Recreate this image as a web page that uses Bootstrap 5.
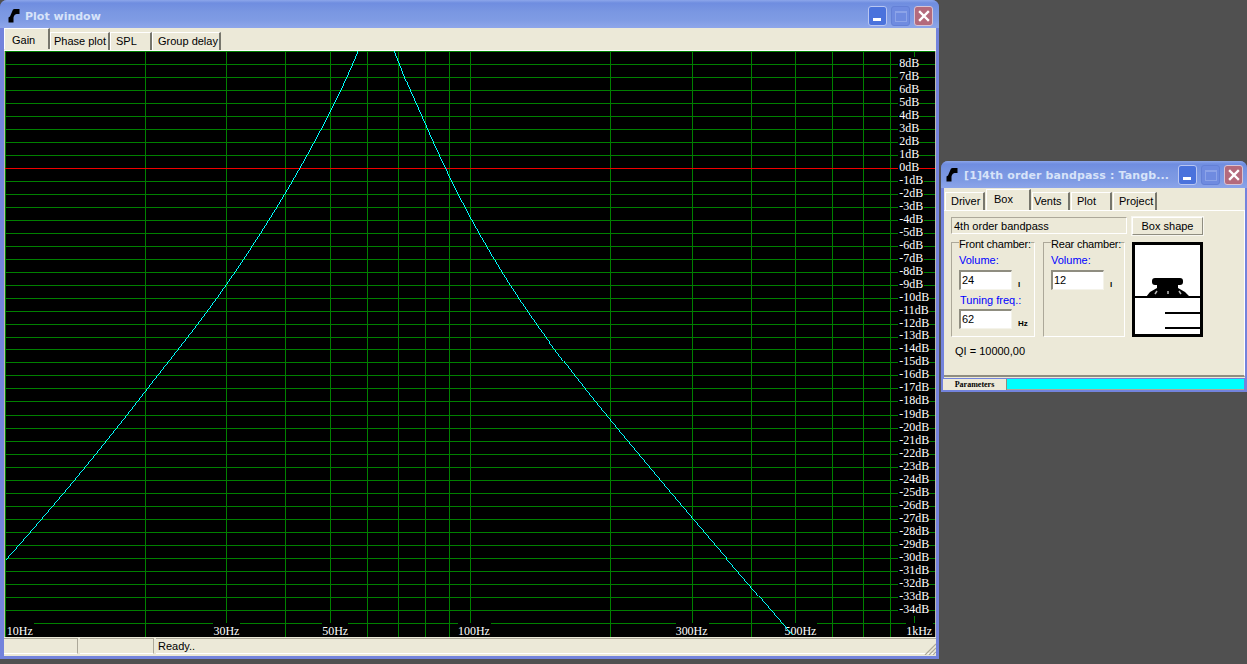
<!DOCTYPE html>
<html lang="en">
<head>
<meta charset="utf-8">
<title>Plot window</title>
<link href="https://cdn.jsdelivr.net/npm/bootstrap@5.3.0/dist/css/bootstrap.min.css" rel="stylesheet">
<style>
html,body{height:100%;margin:0;overflow:hidden}
body{background:#505050;font-family:"Liberation Sans",Arial,sans-serif;font-size:11px;line-height:13px;color:#000}
.xpwin{position:absolute;background:#7383dc;border-radius:7px 7px 0 0;overflow:hidden}
.win-plot{left:0;top:0;width:939px;height:659px}
.win-par{left:941px;top:161px;width:306px;height:231px}
.xptitle{height:28px;padding:4px 6px 0 8px;background:linear-gradient(#8ca6ea 0,#6f8de0 3px,#7a97e2 12px,#7f9be4 20px,#8ea6ea 28px);color:#d7e3f9;font:bold 11px "DejaVu Sans",Verdana,sans-serif;white-space:nowrap}
.win-par .xptitle{height:27px;padding:1px 4px 0 5px;letter-spacing:.13px}
.xpico{flex:none}
.xpttext{margin-left:5px;flex:1 1 auto;min-width:0;overflow:hidden}
.win-par .xpttext{margin-left:6px}
.xpbtn{width:19px;height:20px;margin-left:4px;border:1px solid #b9c6f2;border-radius:3px;display:block;flex:none}
.xpmin{background:#4a72dc}
.xpmax{background:#6f8be0;border-color:#6480d6}
.xpclose{background:#b46a7c;border-color:#d8c4d4}
.xpclient{background:#ece9d8;position:relative}
.win-plot .xpclient{margin:0 3px 0 4px;height:628px}
.xptabs{height:22px;background:#ece9d8;flex-wrap:nowrap;border:0;align-items:flex-end;padding:0}
.xptab{height:18px;background:#ece9d8;border-top:1px solid #fff;border-left:1px solid #fff;border-right:2px solid #77766c;color:#000;text-align:left;padding:2px 0 0 4px;list-style:none;white-space:nowrap}
.xptab.xpon{height:21px;padding:5px 0 0 7px;margin-bottom:1px}
.t-gain{width:46px}.t-phase{width:60px;padding-left:3px}.t-spl{width:42px;padding-left:5px}.t-group{width:69px;padding-left:5px}
.plotsvg{display:block;border-top:1px solid #fff}
.plotsvg text{font:12px "Liberation Serif","Times New Roman",serif;fill:#fff}
.xpstatus{height:21px;padding-top:1px;position:relative}
.xpcell{height:16px;border-right:1px solid #aca899;border-bottom:1px solid #fff;border-top:1px solid #aca899;margin-right:2px;padding:1px 0 0 2px;background:#ece9d8}
.c1,.c2{width:74px}.c3{flex:1 1 auto;margin-right:0;border-right:0}
.xpgrip{position:absolute;right:0;bottom:3px;width:12px;height:12px}
.win-par .xppane{margin:0 2px 0 3px;height:190px;position:relative}
.partabs{height:22px;padding-left:1px}
.partabs .xptab{padding:2px 0 0 5px}
.partabs .xptab.xpon{height:21px;margin-bottom:0;padding:3px 0 0 7px}
.partabs .xptab{margin-right:1px}
.t-dr{width:40px}.t-bx{width:45px}.partabs .t-ve{width:38px;padding-left:1px}.t-pl{width:41px}.t-pr{width:44px}
.parbody{height:167px;padding:6px 0 0 7px;border-bottom:2px solid #8f8d80;border-right:1px solid #fff;border-top:1px solid #fff;background:#ece9d8}
.rofield{width:176px;height:17px;border:1px solid #aca899;border-right-color:#fff;border-bottom-color:#fff;padding:2px 0 0 2px}
.xpb{width:71px;height:18px;margin-left:5px;border:1px solid #8f8d80;border-top-color:#fff;border-left-color:#fff;background:#ece9d8;color:#000;font-size:11px;line-height:13px;padding:0;border-radius:0;box-shadow:0 0 0 1px #f8f7f0}
.xpb:hover{background:#ece9d8;color:#000;border-color:#8f8d80}
.grprow{margin-top:7px}
.grp{height:95px;margin:0;padding:0 0 0 7px;border:1px solid #aca899;border-right-color:#fff;border-bottom-color:#fff;min-width:0}
.grp-a{width:84px;margin-right:8px}.grp-b{width:82px;margin-right:7px}
.grphead{margin-top:-5px;width:fit-content;background:#ece9d8;white-space:nowrap;letter-spacing:-.2px}
.lab{color:#00f;line-height:13px;margin-top:3px}
.lab2{margin:4px 0 0 1px}
.inrow{margin-top:3px}
.inrow2{margin-top:2px}
.xpin{width:53px;height:20px;flex:none;border:2px solid #8f8d80;border-right:1px solid #f4f3ea;border-bottom:1px solid #f4f3ea;border-radius:0;background:#fff;font-size:11px;line-height:14px;padding:0 0 2px 1px;color:#000;box-shadow:none}
.xpin:focus{box-shadow:none;border-color:#8f8d80;background:#fff}
.unit{font-size:8px;line-height:9px;margin:0 0 0 6px;padding-top:10px;font-weight:bold;color:#000}
.ql{margin:8px 0 0 4px;font-size:11px}
.speaker{display:block;width:71px;height:95px;flex:none}
.pstrip{height:12px;margin:2px 1px 0 -1px;padding:0}
.ptab{width:64px;height:11px;background:#ece9d8;font:bold 8px/11px "Liberation Serif",serif;text-align:center;border-right:1px solid #8f8d80}
.pbar{flex:1 1 auto;height:11px;background:#0ff;border-bottom:1px solid #aca899}
</style>
</head>
<body>

<div class="xpwin win-plot">
  <div class="xptitle d-flex align-items-center">
    <svg class="xpico" width="12" height="14" viewBox="0 0 12 14"><path d="M5 .5L6.500 0H11.500V5H8.500Q6.500 5.500 6 7L5.500 8.500V13.500H.5V8.500L2 7.500L3.500 4Z" fill="#000"/></svg>
    <span class="xpttext">Plot window</span>
    <span class="xpbtn xpmin d-flex align-items-end justify-content-center"><svg width="9" height="5" class="mb-1"><rect width="8" height="3" y="2" fill="#fff"/></svg></span>
    <span class="xpbtn xpmax d-flex align-items-center justify-content-center"><svg width="12" height="11"><rect x=".5" y=".5" width="11" height="10" fill="none" stroke="#8ca3e8"/><rect width="12" height="2" fill="#8ca3e8"/></svg></span>
    <span class="xpbtn xpclose d-flex align-items-center justify-content-center"><svg width="12" height="12"><path d="M2 2l8 8M10 2l-8 8" stroke="#fff" stroke-width="2.400" stroke-linecap="square"/></svg></span>
  </div>
  <div class="xpclient">
    <ul class="nav nav-tabs xptabs">
      <li class="xptab xpon t-gain">Gain</li>
      <li class="xptab t-phase">Phase plot</li>
      <li class="xptab t-spl">SPL</li>
      <li class="xptab t-group">Group delay</li>
    </ul>
    <svg class="plotsvg" width="932" height="587" viewBox="4 51 932 587">
      <rect x="4" y="51" width="932" height="587" fill="#000"/>
      <path shape-rendering="crispEdges" fill="none" stroke="#008000" d="M4.500 51V638M144.500 51V638M226.500 51V638M285.500 51V638M330.500 51V638M367.500 51V638M398.500 51V638M425.500 51V638M449.500 51V638M470.500 51V638M610.500 51V638M692.500 51V638M751.500 51V638M796.500 51V638M833.500 51V638M864.500 51V638M891.500 51V638M915.500 51V638
      M4 51.500H936M4 64.500H936M4 77.500H936M4 90.500H936M4 103.500H936M4 116.500H936M4 129.500H936M4 142.500H936M4 155.500H936M4 181.500H936M4 194.500H936M4 207.500H936M4 220.500H936M4 233.500H936M4 246.500H936M4 259.500H936M4 272.500H936M4 285.500H936M4 298.500H936M4 311.500H936M4 324.500H936M4 337.500H936M4 350.500H936M4 363.500H936M4 376.500H936M4 389.500H936M4 402.500H936M4 416.500H936M4 429.500H936M4 442.500H936M4 455.500H936M4 468.500H936M4 481.500H936M4 494.500H936M4 507.500H936M4 520.500H936M4 533.500H936M4 546.500H936M4 559.500H936M4 572.500H936M4 585.500H936M4 598.500H936M4 611.500H936M4 624.500H936"/>
      <path shape-rendering="crispEdges" stroke="#f00000" d="M4 168.500H936"/>
      <g fill="#000" shape-rendering="crispEdges">
        <rect x="899" y="57" width="21" height="117"/><rect x="899" y="174" width="26" height="117"/><rect x="899" y="291" width="31" height="326"/>
        <rect x="5" y="624" width="28" height="14"/><rect x="213" y="624" width="27" height="14"/><rect x="322" y="624" width="26" height="14"/><rect x="458" y="624" width="33" height="14"/><rect x="676" y="624" width="33" height="14"/><rect x="785" y="624" width="33" height="14"/><rect x="907" y="624" width="27" height="14"/>
      </g>
      <text x="900" y="67">8dB</text><text x="900" y="80">7dB</text><text x="900" y="93">6dB</text><text x="900" y="106">5dB</text><text x="900" y="119">4dB</text><text x="900" y="132">3dB</text><text x="900" y="145">2dB</text><text x="900" y="158">1dB</text><text x="900" y="171">0dB</text>
      <text x="900" y="184">-1dB</text><text x="900" y="197">-2dB</text><text x="900" y="210">-3dB</text><text x="900" y="223">-4dB</text><text x="900" y="236">-5dB</text><text x="900" y="249">-6dB</text><text x="900" y="262">-7dB</text><text x="900" y="275">-8dB</text><text x="900" y="288">-9dB</text>
      <text x="900" y="301">-10dB</text><text x="900" y="314">-11dB</text><text x="900" y="327">-12dB</text><text x="900" y="340">-13dB</text><text x="900" y="353">-14dB</text><text x="900" y="366">-15dB</text><text x="900" y="379">-16dB</text><text x="900" y="392">-17dB</text><text x="900" y="405">-18dB</text><text x="900" y="419">-19dB</text><text x="900" y="432">-20dB</text><text x="900" y="445">-21dB</text><text x="900" y="458">-22dB</text><text x="900" y="471">-23dB</text><text x="900" y="484">-24dB</text><text x="900" y="497">-25dB</text><text x="900" y="510">-26dB</text><text x="900" y="523">-27dB</text><text x="900" y="536">-28dB</text><text x="900" y="549">-29dB</text><text x="900" y="562">-30dB</text><text x="900" y="575">-31dB</text><text x="900" y="588">-32dB</text><text x="900" y="601">-33dB</text><text x="900" y="614">-34dB</text>
      <text x="6" y="636">10Hz</text><text x="213" y="636">30Hz</text><text x="322" y="636">50Hz</text><text x="458" y="636">100Hz</text><text x="676" y="636">300Hz</text><text x="785" y="636">500Hz</text><text x="907" y="636">1kHz</text>
      <path fill="none" stroke="#00ffff" shape-rendering="crispEdges" d="M5 561C51.300 509 97.700 453.200 144 393C171.300 357.500 198.700 324.600 226 285C260.700 234.700 295.300 179.700 330 112C339.300 93.900 348.700 73.300 358 51"/>
      <path fill="none" stroke="#00ffff" shape-rendering="crispEdges" d="M394 51C405 79.600 416 102.700 427 128C441.300 160.900 455.700 190.500 470 217C496.700 266.400 523.300 307 550 343C586.700 392.500 623.300 436 660 480C704.300 533 748.700 584 793 636"/>
    </svg>
    <div class="xpstatus d-flex">
      <div class="xpcell c1"></div><div class="xpcell c2"></div><div class="xpcell c3">Ready..</div>
      <svg class="xpgrip" viewBox="0 0 12 12"><path d="M12 1L1 12M12 5L5 12M12 9L9 12" stroke="#aca899" stroke-width="1.200"/></svg>
    </div>
  </div>
</div>

<div class="xpwin win-par">
  <div class="xptitle d-flex align-items-center">
    <svg class="xpico" width="12" height="14" viewBox="0 0 12 14"><path d="M5 .5L6.500 0H11.500V5H8.500Q6.500 5.500 6 7L5.500 8.500V13.500H.5V8.500L2 7.500L3.500 4Z" fill="#000"/></svg>
    <span class="xpttext">[1]4th order bandpass : Tangb...</span>
    <span class="xpbtn xpmin d-flex align-items-end justify-content-center"><svg width="9" height="5" class="mb-1"><rect width="8" height="3" y="2" fill="#fff"/></svg></span>
    <span class="xpbtn xpmax d-flex align-items-center justify-content-center"><svg width="12" height="11"><rect x=".5" y=".5" width="11" height="10" fill="none" stroke="#8ca3e8"/><rect width="12" height="2" fill="#8ca3e8"/></svg></span>
    <span class="xpbtn xpclose d-flex align-items-center justify-content-center"><svg width="12" height="12"><path d="M2 2l8 8M10 2l-8 8" stroke="#fff" stroke-width="2.400" stroke-linecap="square"/></svg></span>
  </div>
  <div class="xpclient xppane">
    <ul class="nav nav-tabs xptabs partabs">
      <li class="xptab t-dr">Driver</li>
      <li class="xptab xpon t-bx">Box</li>
      <li class="xptab t-ve">Vents</li>
      <li class="xptab t-pl">Plot</li>
      <li class="xptab t-pr">Project</li>
    </ul>
    <div class="parbody">
      <div class="d-flex">
        <div class="rofield">4th order bandpass</div>
        <button type="button" class="btn xpb">Box shape</button>
      </div>
      <div class="d-flex grprow">
        <fieldset class="grp grp-a">
          <div class="grphead">Front chamber:</div>
          <div class="lab">Volume:</div>
          <div class="d-flex inrow"><input class="form-control xpin" value="24" readonly><span class="unit">l</span></div>
          <div class="lab lab2">Tuning freq.:</div>
          <div class="d-flex inrow2"><input class="form-control xpin" value="62" readonly><span class="unit">Hz</span></div>
        </fieldset>
        <fieldset class="grp grp-b">
          <div class="grphead">Rear chamber:</div>
          <div class="lab">Volume:</div>
          <div class="d-flex inrow"><input class="form-control xpin" value="12" readonly><span class="unit">l</span></div>
        </fieldset>
        <svg class="speaker" viewBox="1132 242 71 95">
          <rect x="1133.500" y="243.500" width="68" height="92" fill="#fff" stroke="#000" stroke-width="3"/>
          <rect x="1133" y="296" width="67" height="2" fill="#000"/>
          <rect x="1152" y="278" width="31" height="7" rx="3" fill="#000"/>
          <path d="M1146 297L1150 292L1157 288V284H1178V288L1185 292L1190 297Z" fill="#000"/>
          <path d="M1155 294l2-3M1168 291v3M1181 294l-2-3" stroke="#bbb" stroke-width="1.500"/>
          <rect x="1165" y="312" width="36" height="2" fill="#000"/>
          <rect x="1165" y="327" width="36" height="2" fill="#000"/>
        </svg>
      </div>
      <p class="ql">QI = 10000,00</p>
    </div>
    <div class="d-flex pstrip">
      <div class="ptab">Parameters</div>
      <div class="pbar"></div>
    </div>
  </div>
</div>

</body>
</html>
